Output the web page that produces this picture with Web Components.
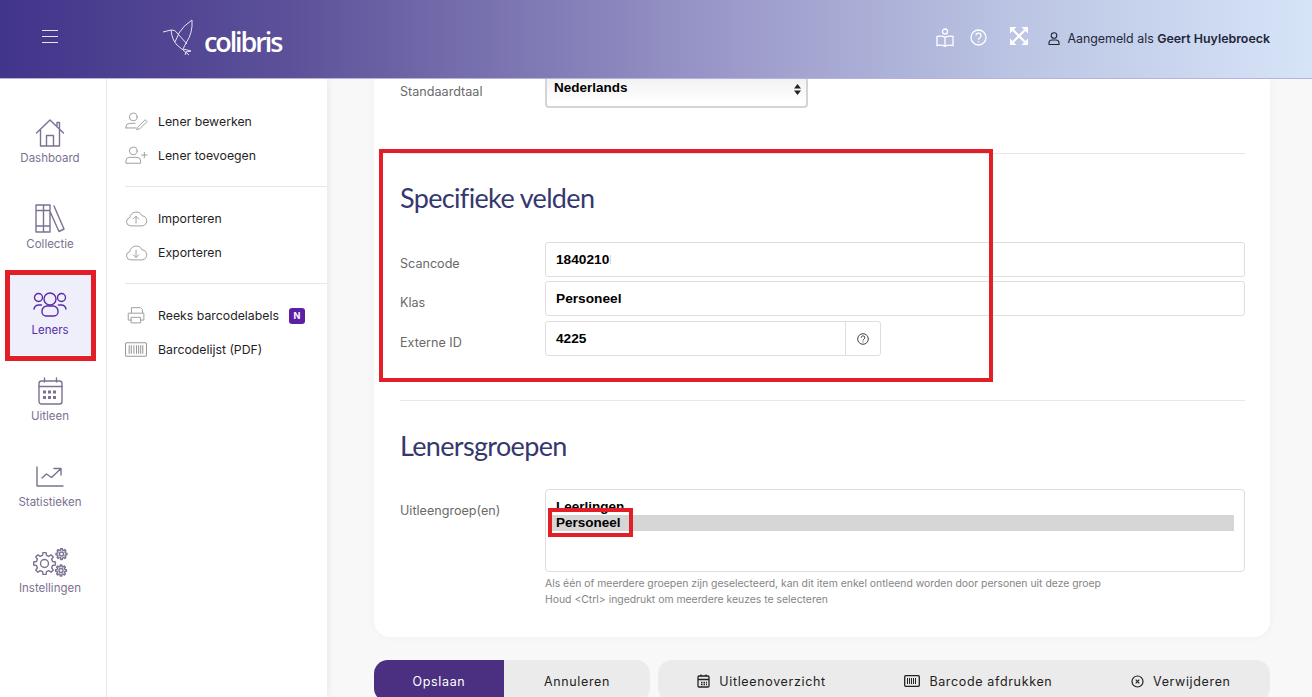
<!doctype html>
<html lang="nl">
<head>
<meta charset="utf-8">
<title>Colibris</title>
<style>
  html,body{margin:0;height:100%;overflow:hidden;background:#f8f8f8}
  body{font-family:Inter,Roboto,"Liberation Sans",sans-serif}
</style>
</head>
<body>
<colibris-app></colibris-app>
<script>
// gear outline, teeth are simple trapezoids
const gear=(cx,cy,ro,ri,n)=>{
  let d='';
  for(let i=0;i<n;i++){
    const a=i*2*Math.PI/n,w=Math.PI/n;
    const pt=(r,t)=>(cx+r*Math.cos(t)).toFixed(2)+' '+(cy+r*Math.sin(t)).toFixed(2);
    d+=(i?'L':'M')+pt(ri,a-w*.62)+'L'+pt(ro,a-w*.36)+'L'+pt(ro,a+w*.36)+'L'+pt(ri,a+w*.62);
  }
  return d+'z';
};
const ICONS={
  home:'<path d="M1.500 15 15 2l13.500 13M5.500 12v16h19V12M11.500 28V17.500h7V28M22 9V4.500h2.500V11"/>',
  books:'<path d="M1 1h7.500v27H1zM8.500 1H15v27H8.500zM1 6.500h14M1 22h14M19 2l10 23-5 2.500-9-20"/>',
  users:'<circle cx="17" cy="7" r="6"/><circle cx="5.500" cy="5.500" r="4"/><circle cx="28.500" cy="5.500" r="4"/><path d="M9 19a5 5 0 0 1 5-5h6a5 5 0 0 1 5 5v1a4 4 0 0 1-4 4h-8a4 4 0 0 1-4-4zM1 17a5 5 0 0 1 5-4h2.500M33 17a5 5 0 0 0-5-4h-2.500"/>',
  calendar:'<rect x="1" y="4" width="23" height="23" rx="2.500"/><path d="M1 9.500h23M6.500 1v4M18.500 1v4"/><path stroke-width="3" stroke-linecap="butt" stroke-dasharray="3 2" d="M5 15h15M5 20.500h15"/>',
  chart:'<path d="M1 1v19h26M6 12l4.500-4 5 3.500 9-8.500M18 2.500h7V9"/>',
  gears:`<path d="${gear(11.500,15.500,11,8.300,8)}"/><circle cx="11.500" cy="15.500" r="4"/><path d="${gear(28.500,6,5.500,4,8)}"/><circle cx="28.500" cy="6" r="2"/><path d="${gear(28,22.500,5.500,4,8)}"/><circle cx="28" cy="22.500" r="2"/>`,
  useredit:'<circle cx="9" cy="5" r="4.200"/><path d="M1 17v-1a4 4 0 0 1 4-4h6M1 17h11M14 16l8-8 2 2-8 8-3 .6z"/>',
  useradd:'<circle cx="9" cy="5" r="4.200"/><path d="M1 18v-2a4 4 0 0 1 4-4h8a4 4 0 0 1 4 4v2zM18 9.500h6M21 6.500v6"/>',
  cloudup:'<path d="M6 18a4.500 4.500 0 0 1-.8-8.900 7 7 0 0 1 13.300-2A5.500 5.500 0 0 1 19 18zM12 15V8M9 10.500 12 7.500l3 3"/>',
  clouddown:'<path d="M6 18a4.500 4.500 0 0 1-.8-8.900 7 7 0 0 1 13.300-2A5.500 5.500 0 0 1 19 18zM12 7.500V15M9 12.500l3 3 3-3"/>',
  printer:'<path d="M5 7V1.500h10l2 2V7M5 15H1.500V7.500h17V15H15M5 12h10v6H5z"/>',
  barcodebox:'<rect x=".5" y=".5" width="20" height="13" rx="1"/><path stroke-width="1" stroke-linecap="butt" d="M4 3v8M6 3v8M8.500 3v8M11 3v8M13 3v8M15 3v8M17 3v8"/>'
};
const svg=(name,w,h,vb,sw)=>`<svg width="${w}" height="${h}" viewBox="${vb}" fill="none" stroke="currentColor" stroke-width="${sw||1.300}" stroke-linejoin="round" stroke-linecap="round">${ICONS[name]}</svg>`;

class AppHeader extends HTMLElement{
  constructor(){
    super();
    this.attachShadow({mode:'open'}).innerHTML=`
    <style>
      :host{display:flex;height:78px;align-items:center;flex:none;position:relative;z-index:3;
        background:linear-gradient(90deg,#41348b 0%,#5c5199 22%,#9a98c9 55%,#bcc6e4 78%,#d6e4f8 100%);
        border-bottom:1px solid #b6b2de}
      .burger{width:100px;display:flex;justify-content:center;color:#e6e4f3;margin-bottom:5px}
      .logo{display:flex;align-items:flex-end;margin-left:61px;color:#fff;height:38px;margin-top:-3px}
      .logo span{font:600 27px/30px "Open Sans",sans-serif;letter-spacing:-2.100px;margin-left:10px;margin-top:4px}
      .tools{margin-left:auto;display:flex;align-items:center;color:#fff;padding-right:42px;margin-top:-2px}
      .who{display:flex;align-items:center;gap:7px;color:#23263a;font-size:12.400px;margin-left:20px}
      b{font-weight:600}
    </style>
    <div class="burger"><svg width="16" height="13" viewBox="0 0 16 13" fill="none" stroke="currentColor"><path d="M0 .5h16M0 6.500h16M0 12.500h16"/></svg></div>
    <div class="logo">
      <svg width="33" height="38" viewBox="0 0 33 38" fill="none" stroke="#e6e4f3" stroke-width="1"><path d="M2 13 10 11q4-1 7 4l9 10M31 1q-9 6-13 13l-4 9M31 1q1 13-6 23l-3 6M10 11q1 10 6 15l12 10M22 30l8 2-5 1-1 3"/></svg>
      <span>colibris</span>
    </div>
    <div class="tools">
      <svg style="margin-top:-2px" width="18" height="19" viewBox="0 0 18 19" fill="none" stroke="currentColor" stroke-width="1.300"><circle cx="9" cy="3.500" r="2.500"/><path d="M9 9.500C7 8 4 8 1 8.500v9c3-.5 6-.5 8 1 2-1.500 5-1.500 8-1v-9c-3-.5-6-.5-8 1zM9 9.500v9"/></svg>
      <svg style="margin:-1px 0 0 16px" width="17" height="17" viewBox="0 0 17 17" fill="none" stroke="currentColor" stroke-width="1.300"><circle cx="8.500" cy="8.500" r="7.500"/><path d="M6 6.500a2.500 2.500 0 1 1 3.800 2.200c-.9.500-1.300 1-1.300 2"/><path d="M8.500 12.200v1.300"/></svg>
      <svg style="margin:-4px 0 0 23px" width="18" height="18" viewBox="0 0 18 18" fill="none" stroke="currentColor" stroke-width="2.200"><path d="M3 3l12 12M15 3 3 15"/><path fill="currentColor" stroke="none" d="M0 0h6.500L0 6.500zM18 0v6.500L11.500 0zM0 18v-6.500L6.500 18zM18 18h-6.500l6.500-6.500z"/></svg>
      <div class="who">
        <svg width="12" height="13" viewBox="0 0 12 13" fill="none" stroke="currentColor" stroke-width="1.100"><circle cx="6" cy="3.500" r="2.800"/><path d="M1 12.500V11a3 3 0 0 1 3-3h4a3 3 0 0 1 3 3v1.500z"/></svg>
        <span>Aangemeld als <b>Geert Huylebroeck</b></span>
      </div>
    </div>`;
  }
}
customElements.define('app-header',AppHeader);

class RailItem extends HTMLElement{
  constructor(){
    super();
    const active=this.hasAttribute('active');
    this.attachShadow({mode:'open'}).innerHTML=`
    <style>
      :host{display:flex;flex-direction:column;align-items:center;width:82px;height:80px;position:relative;
        color:${active?'#5a2ca8':'#7c7191'};background:${active?'#efeefb':'transparent'}}
      .ic{padding-top:${this.getAttribute('top')||14}px;display:flex;justify-content:center}
      .lb{position:absolute;left:-10px;right:-10px;top:48px;text-align:center;font-size:11.500px;line-height:14px}
    </style>
    <div class="ic">${svg(this.getAttribute('icon'),this.getAttribute('w'),this.getAttribute('h'),this.getAttribute('vb'),1.400)}</div>
    <div class="lb"><slot></slot></div>`;
  }
}
customElements.define('rail-item',RailItem);

class NavRail extends HTMLElement{
  constructor(){
    super();
    this.attachShadow({mode:'open'}).innerHTML=`
    <style>
      :host{display:flex;flex-direction:column;align-items:center;gap:6px;width:100px;padding:24px 6px 0 0;flex:none;
        background:#fff;border-right:1px solid #e9e9e9;box-sizing:content-box}
    </style>
    <slot></slot>`;
  }
}
customElements.define('nav-rail',NavRail);

class MenuItem extends HTMLElement{
  constructor(){
    super();
    const vb=this.getAttribute('vb')||'0 0 25 20';
    this.attachShadow({mode:'open'}).innerHTML=`
    <style>
      :host{display:flex;align-items:center;height:33.500px;font-size:12.300px;color:#1f1f27;position:relative}
      .ic{width:33px;color:#999;display:flex}
      .badge{margin-left:10px;width:16px;height:16px;border-radius:3px;background:#5d1fa3;color:#fff;font:700 9px/16px Inter,sans-serif;text-align:center}
    </style>
    <span class="ic">${svg(this.getAttribute('icon'),this.getAttribute('w')||23,this.getAttribute('h')||19,vb,1)}</span>
    <slot></slot>${this.getAttribute('badge')?`<span class="badge">${this.getAttribute('badge')}</span>`:''}`;
  }
}
customElements.define('menu-item',MenuItem);

class SideMenu extends HTMLElement{
  constructor(){
    super();
    this.attachShadow({mode:'open'}).innerHTML=`
    <style>
      :host{display:block;width:202px;padding:26px 0 0 18px;flex:none;background:#fff;box-shadow:2px 0 5px rgba(0,0,0,.06);position:relative;z-index:1}
      ::slotted(hr){border:0;border-top:1px solid #e6e6e6;margin:14px 0 15px}
    </style>
    <slot></slot>`;
  }
}
customElements.define('side-menu',SideMenu);

class FormRow extends HTMLElement{
  constructor(){
    super();
    const top=this.getAttribute('label-top');
    this.attachShadow({mode:'open'}).innerHTML=`
    <style>
      :host{display:grid;grid-template-columns:145px 1fr;align-items:${top?'start':'center'};font-size:12.600px;color:#6a6a6a}
      .lb{padding-top:${top||7}px}
    </style>
    <div class="lb">${this.getAttribute('label')}</div>
    <div><slot></slot></div>`;
  }
}
customElements.define('form-row',FormRow);

class TextField extends HTMLElement{
  constructor(){
    super();
    const help=this.hasAttribute('help');
    this.attachShadow({mode:'open'}).innerHTML=`
    <style>
      :host{display:flex;height:35px;box-sizing:border-box;border:1px solid #dedede;border-radius:3px;background:#fff;
        align-items:center;width:${help?'336px':'auto'};font:700 13.700px "Liberation Sans",sans-serif;color:#000}
      .val{flex:1;padding:0 0 1px 10px}
      .smudge{display:inline-block;width:1px;height:9px;background:#d8d8d8;margin-left:1px}
      .help{width:34px;height:100%;border-left:1px solid #dedede;display:flex;align-items:center;justify-content:center;color:#444}
    </style>
    <div class="val"><slot></slot>${this.hasAttribute('smudge')?'<span class="smudge"></span>':''}</div>
    ${help?'<div class="help"><svg width="12" height="12" viewBox="0 0 12 12" fill="none" stroke="currentColor"><circle cx="6" cy="6" r="5.300"/><path d="M4.200 4.700a1.800 1.800 0 1 1 2.700 1.500c-.6.400-.9.700-.9 1.300M6 8.500v1"/></svg></div>':''}`;
  }
}
customElements.define('text-field',TextField);

class SelectBox extends HTMLElement{
  constructor(){
    super();
    this.attachShadow({mode:'open'}).innerHTML=`
    <style>
      :host{display:flex;width:263px;height:29px;box-sizing:border-box;padding:0 5px 0 7px;justify-content:space-between;
        background:linear-gradient(#f2f2f2,#fff 85%);border:solid #d4d4d4;border-width:0 2px 2px;border-radius:0 0 4px 4px;
        font:700 13.500px/18px "Liberation Sans",sans-serif;color:#000}
      svg{margin-top:5px}
    </style>
    <slot></slot>
    <svg width="7" height="11" viewBox="0 0 7 11" fill="#222"><path d="M3.500 0 7 4.500H0zM3.500 11 0 6.500h7z"/></svg>`;
  }
}
customElements.define('select-box',SelectBox);

class ListBox extends HTMLElement{
  constructor(){
    super();
    this.attachShadow({mode:'open'}).innerHTML=`
    <style>
      :host{display:block;height:83px;box-sizing:border-box;border:1px solid #dedede;border-radius:4px;background:#fff;
        padding:9px 10px 0 2px;font:700 13.500px/16px "Liberation Sans",sans-serif;color:#000}
      .opt{height:16px;padding-left:8px;overflow:hidden;line-height:15px}
      .on{background:#d6d6d6;line-height:16px}
    </style>
    <div class="opt">Leerlingen</div>
    <div class="opt on">Personeel</div>`;
  }
}
customElements.define('list-box',ListBox);

class FormCard extends HTMLElement{
  constructor(){
    super();
    this.attachShadow({mode:'open'}).innerHTML=`
    <style>
      :host{display:block;height:558px;box-sizing:border-box;padding:0 25px 0 26px;background:#fff;border-radius:0 0 16px 16px;
        box-shadow:0 0 8px rgba(0,0,0,.04);flex:none}
      hr{border:0;border-top:1px solid #e8e8e8;margin:0}
      h2{font:400 27px/34px Lato,sans-serif;color:#35386f;margin:0;letter-spacing:-.650px}
      .rows{display:flex;flex-direction:column;gap:4px}
      .note{font-size:10.400px;line-height:16px;color:#858585;margin:4px 0 0 145px}
    </style>
    <form-row label="Standaardtaal" label-top="5"><select-box>Nederlands</select-box></form-row>
    <hr style="margin-top:45px">
    <h2 style="margin-top:27px;margin-bottom:27px">Specifieke velden</h2>
    <div class="rows">
      <form-row label="Scancode"><text-field smudge>1840210</text-field></form-row>
      <form-row label="Klas"><text-field>Personeel</text-field></form-row>
      <form-row label="Externe ID" style="margin-top:1px"><text-field help>4225</text-field></form-row>
    </div>
    <hr style="margin-top:44px">
    <h2 style="margin-top:28px;margin-bottom:26px">Lenersgroepen</h2>
    <form-row label="Uitleengroep(en)" label-top="14"><list-box></list-box></form-row>
    <div class="note">Als één of meerdere groepen zijn geselecteerd, kan dit item enkel ontleend worden door personen uit deze groep<br>Houd &lt;Ctrl&gt; ingedrukt om meerdere keuzes te selecteren</div>`;
  }
}
customElements.define('form-card',FormCard);

class ActionBar extends HTMLElement{
  constructor(){
    super();
    this.attachShadow({mode:'open'}).innerHTML=`
    <style>
      :host{display:flex;gap:8px;height:42px;margin-top:23px;flex:none;font-size:12.500px;letter-spacing:.65px;color:#222}
      .grp{display:flex;background:#ebebeb;border-radius:14px;overflow:hidden;align-items:center;box-sizing:border-box}
      .save{background:#4b2f80;color:#fff;width:130px;height:42px;display:flex;align-items:center;justify-content:center}
      .cancel{width:146px;text-align:center}
      .more{flex:1;justify-content:space-around}
      .more span{display:flex;align-items:center;gap:9px}
    </style>
    <div class="grp"><div class="save">Opslaan</div><div class="cancel">Annuleren</div></div>
    <div class="grp more">
      <span><svg width="13" height="14" viewBox="1 0 13 14" fill="none" stroke="currentColor" stroke-width="1.300"><rect x="2" y="2" width="11" height="11" rx="1"/><path d="M2 5.500h11M5 .5v2M10 .5v2"/><path stroke-dasharray="1.500 1" d="M5 8.500h6M5 10.500h6"/></svg>Uitleenoverzicht</span>
      <span><svg width="16" height="12" viewBox="0 0 16 12" fill="none" stroke="currentColor" stroke-width="1.300"><rect x=".7" y=".7" width="14.600" height="10.600" rx="1"/><path stroke-width="1" d="M3.500 3v6M5.500 3v6M7.500 3v6M9.500 3v6M11.500 3v6"/></svg>Barcode afdrukken</span>
      <span><svg width="13" height="13" viewBox="0 0 13 13" fill="none" stroke="currentColor" stroke-width="1.200"><circle cx="6.500" cy="6.500" r="5.500"/><path d="M4.700 4.700l3.600 3.600M8.300 4.700 4.700 8.300"/></svg>Verwijderen</span>
    </div>`;
  }
}
customElements.define('action-bar',ActionBar);

class RedMark extends HTMLElement{
  constructor(){
    super();
    this.attachShadow({mode:'open'}).innerHTML=`
    <style>:host{display:block;position:absolute;box-sizing:border-box;border:solid #e21f26;z-index:5;pointer-events:none}</style>`;
  }
}
customElements.define('red-mark',RedMark);

class ColibrisApp extends HTMLElement{
  constructor(){
    super();
    this.attachShadow({mode:'open'}).innerHTML=`
    <style>
      :host{display:flex;flex-direction:column;height:697px;overflow:hidden;position:relative;background:#f8f8f8}
      .body{display:flex;flex:1;min-height:0}
      main{flex:1;padding:0 42px 0 47px;display:flex;flex-direction:column;min-width:0}
    </style>
    <app-header></app-header>
    <div class="body">
      <nav-rail>
        <rail-item icon="home" w="30" h="29" vb="0 0 30 29" top="15">Dashboard</rail-item>
        <rail-item icon="books" w="31" h="29" vb="0 0 31 29" top="15">Collectie</rail-item>
        <rail-item icon="users" w="34" h="25" vb="0 0 34 25" top="17" active>Leners</rail-item>
        <rail-item icon="calendar" w="25" h="28" vb="0 0 25 28" top="16">Uitleen</rail-item>
        <rail-item icon="chart" w="28" h="21" vb="0 0 28 21" top="19">Statistieken</rail-item>
        <rail-item icon="gears" w="35" h="29" vb="0 0 35 29" top="15">Instellingen</rail-item>
      </nav-rail>
      <side-menu>
        <menu-item icon="useredit">Lener bewerken</menu-item>
        <menu-item icon="useradd">Lener toevoegen</menu-item>
        <hr>
        <menu-item icon="cloudup">Importeren</menu-item>
        <menu-item icon="clouddown">Exporteren</menu-item>
        <hr>
        <menu-item icon="printer" vb="-2 0 25 20" badge="N">Reeks barcodelabels</menu-item>
        <menu-item icon="barcodebox" w="22" h="15" vb="0 0 21 14">Barcodelijst (PDF)</menu-item>
      </side-menu>
      <main>
        <form-card></form-card>
        <action-bar></action-bar>
      </main>
    </div>
    <red-mark style="left:5px;top:270px;width:91px;height:91px;border-width:5px"></red-mark>
    <red-mark style="left:379px;top:149px;width:614px;height:233px;border-width:4px"></red-mark>
    <red-mark style="left:548px;top:508px;width:85px;height:29px;border-width:4px"></red-mark>`;
  }
}
customElements.define('colibris-app',ColibrisApp);
</script>
</body>
</html>
